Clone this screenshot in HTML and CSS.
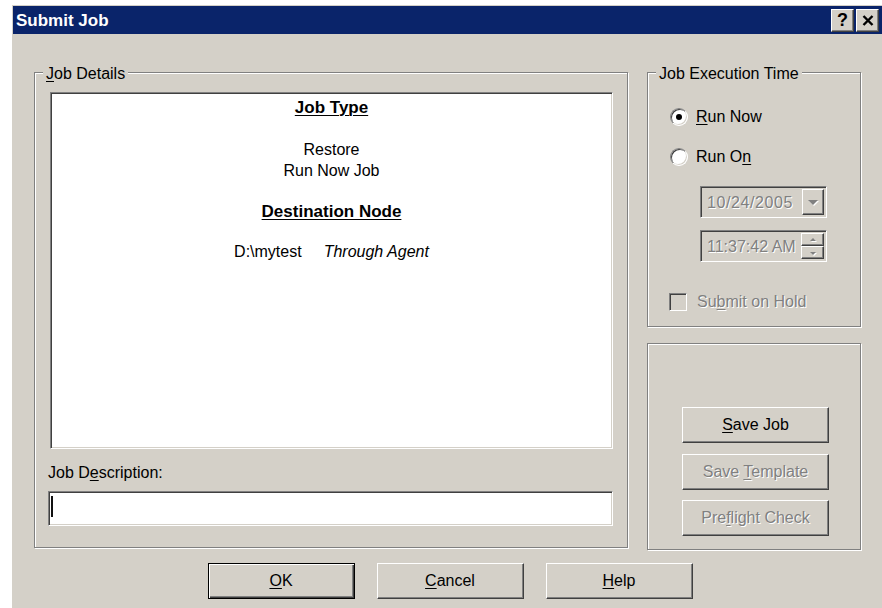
FILE: index.html
```html
<!DOCTYPE html>
<html lang="en">
<head>
<meta charset="utf-8">
<title>Submit Job</title>
<link rel="stylesheet" href="styles.css">
</head>
<body>
<div class="dialog">
  <div class="titlebar">
    <span class="title">Submit Job</span>
    <div class="caption-buttons">
      <button class="cap-btn cap-help" type="button">?</button>
      <button class="cap-btn cap-close" type="button" aria-label="Close">
        <svg width="12" height="11" viewBox="0 0 12 11"><path d="M1.5 1 L10.5 10 M10.5 1 L1.5 10" stroke="#000" stroke-width="2.4" fill="none"/></svg>
      </button>
    </div>
  </div>

  <div class="content">
    <div class="main-row">
      <fieldset class="group details">
        <legend><u>J</u>ob Details</legend>
        <div class="details-inner">
          <div class="summary">
            <div class="heading">Job Type</div>
            <div class="gap-a">Restore</div>
            <div>Run Now Job</div>
            <div class="heading gap-b">Destination Node</div>
            <div class="gap-c"><span>D:\mytest</span><span class="agent">Through Agent</span></div>
          </div>
          <div class="field-label">Job D<u>e</u>scription:</div>
          <div class="textbox"><span class="caret"></span></div>
        </div>
      </fieldset>

      <div class="side">
        <fieldset class="group exec">
          <legend>Job Execution Time</legend>
          <div class="exec-inner">
            <div class="option-row radio-row">
              <span class="radio checked"></span>
              <span class="option-label"><u>R</u>un Now</span>
            </div>
            <div class="option-row radio-row second">
              <span class="radio"></span>
              <span class="option-label">Run O<u>n</u></span>
            </div>
            <div class="field combo date">
              <span class="field-text disabled">10/24/2005</span>
              <span class="drop-btn"><span class="arrow-down"></span></span>
            </div>
            <div class="field combo time">
              <span class="field-text disabled">11:37:42 AM</span>
              <span class="spin">
                <span class="spin-btn"><span class="arrow-up small"></span></span>
                <span class="spin-btn"><span class="arrow-down small"></span></span>
              </span>
            </div>
            <div class="option-row check-row">
              <span class="checkbox"></span>
              <span class="option-label disabled check-label">Su<u>b</u>mit on Hold</span>
            </div>
          </div>
        </fieldset>

        <fieldset class="group actions">
          <div class="actions-inner">
            <button class="btn" type="button"><u>S</u>ave Job</button>
            <button class="btn disabled second" type="button">Save <u>T</u>emplate</button>
            <button class="btn disabled third" type="button">Pre<u>f</u>light Check</button>
          </div>
        </fieldset>
      </div>
    </div>

    <div class="bottom-row">
      <button class="btn btn-default" type="button"><u>O</u>K</button>
      <button class="btn" type="button"><u>C</u>ancel</button>
      <button class="btn" type="button"><u>H</u>elp</button>
    </div>
  </div>
</div>
</body>
</html>
```

FILE: styles.css
```css
* {
  box-sizing: border-box;
}

html,
body {
  margin: 0;
}

body {
  background: #fff;
  font-family: "Liberation Sans", Arial, sans-serif;
  font-size: 16px;
  color: #000;
  overflow: hidden;
}

u {
  text-decoration-thickness: 1px;
  text-underline-offset: 2px;
}

/* window frame */
.dialog {
  margin: 5px 0 0 12px;
  width: 870px;
  height: 603px;
  background: #d4d0c8;
  padding: 1px 0 0 1px;
}

.titlebar {
  display: flex;
  align-items: center;
  height: 28px;
  background: #0a246a;
  padding: 0 3px;
}

.title {
  flex: 1;
  height: 28px;
  padding-top: 2px;
  line-height: 26px;
  color: #fff;
  font-weight: bold;
  font-size: 17px;
}

.caption-buttons {
  display: flex;
  gap: 2px;
}

.cap-btn {
  width: 23px;
  height: 23px;
  padding: 0;
  display: flex;
  align-items: center;
  justify-content: center;
  background: #d4d0c8;
  border: 1px solid;
  border-color: #fff #404040 #404040 #fff;
  box-shadow: inset -1px -1px 0 #808080;
  font-family: "Liberation Sans", Arial, sans-serif;
  font-weight: bold;
  font-size: 18px;
  line-height: 1;
  color: #000;
}

/* dialog body */
.content {
  padding: 27px 21px 0;
}

.main-row {
  display: flex;
  align-items: flex-start;
  gap: 19px;
}

.group {
  margin: 0;
  padding: 0;
  min-width: 0;
  border: 1px solid #808080;
  box-shadow: inset 1px 1px 0 #fff, 1px 1px 0 #fff;
}

.group legend {
  margin-left: 8px;
  padding: 4px 3px 0;
  line-height: 18px;
  background: #d4d0c8;
}

.details {
  width: 594px;
}

.details-inner {
  padding: 9px 14px 21px 13px;
}

/* sunken white list area */
.summary {
  margin-left: 2px;
  width: 563px;
  height: 357px;
  padding-top: 4px;
  background: #fff;
  border: 1px solid;
  border-color: #808080 #fff #fff #808080;
  box-shadow: inset 1px 1px 0 #404040, inset -1px -1px 0 #d4d0c8;
  text-align: center;
  line-height: 21px;
}

.heading {
  font-weight: bold;
  font-size: 17px;
  text-decoration: underline;
  text-decoration-thickness: 1px;
  text-underline-offset: 2px;
}

.gap-a {
  margin-top: 21px;
}

.gap-b {
  margin-top: 20px;
}

.gap-c {
  margin-top: 19px;
}

.agent {
  margin-left: 22px;
  font-style: italic;
}

.field-label {
  margin-top: 15px;
  line-height: 18px;
}

.textbox {
  margin-top: 9px;
  width: 565px;
  height: 35px;
  padding: 4px 0 0 2px;
  background: #fff;
  border: 1px solid;
  border-color: #808080 #fff #fff #808080;
  box-shadow: inset 1px 1px 0 #404040, inset -1px -1px 0 #d4d0c8;
}

.caret {
  display: block;
  width: 2px;
  height: 21px;
  background: #111;
}

/* right column */
.side {
  width: 214px;
}

.side .group {
  width: 100%;
}

.exec-inner {
  padding: 22px 0 12px;
}

.option-row {
  display: flex;
  align-items: center;
  height: 24px;
}

.radio-row {
  padding-left: 22px;
}

.radio-row.second {
  margin-top: 16px;
}

.option-label {
  margin-left: 8px;
  line-height: 18px;
}

.radio {
  position: relative;
  width: 18px;
  height: 18px;
  border-radius: 50%;
  background: #fff;
  border: 1px solid;
  border-color: #808080 #fff #fff #808080;
  box-shadow: inset 1px 1px 0 #404040, inset -1px -1px 0 #d4d0c8;
}

.radio.checked::after {
  content: "";
  position: absolute;
  left: 5px;
  top: 5px;
  width: 6px;
  height: 6px;
  border-radius: 50%;
  background: #000;
}

.disabled {
  color: #808080;
  text-shadow: 1px 1px 0 #fff;
}

.field {
  display: flex;
  align-items: stretch;
  width: 127px;
  height: 32px;
  margin-left: 52px;
  padding: 2px;
  background: #d4d0c8;
  border: 1px solid;
  border-color: #808080 #fff #fff #808080;
  box-shadow: inset 1px 1px 0 #404040, inset -1px -1px 0 #d4d0c8;
}

.date {
  margin-top: 17px;
}

.date .field-text {
  letter-spacing: 0.6px;
}

.time {
  margin-top: 12px;
}

.field-text {
  flex: 1;
  padding-left: 4px;
  line-height: 28px;
  white-space: nowrap;
  overflow: hidden;
}

.drop-btn,
.spin-btn {
  display: flex;
  align-items: center;
  justify-content: center;
  background: #d4d0c8;
  border: 1px solid;
  border-color: #fff #404040 #404040 #fff;
  box-shadow: inset -1px -1px 0 #808080;
}

.drop-btn {
  width: 22px;
}

.spin {
  display: flex;
  flex-direction: column;
  width: 23px;
}

.spin-btn {
  flex: 1;
}

.arrow-down,
.arrow-up {
  width: 0;
  height: 0;
  border-left: 5px solid transparent;
  border-right: 5px solid transparent;
  filter: drop-shadow(1px 1px 0 #fff);
}

.arrow-down {
  border-top: 5px solid #808080;
  margin-top: 1px;
}

.arrow-up {
  border-bottom: 5px solid #808080;
}

.arrow-down.small,
.arrow-up.small {
  border-left-width: 3px;
  border-right-width: 3px;
}

.arrow-down.small {
  border-top-width: 3px;
}

.arrow-up.small {
  border-bottom-width: 3px;
}

.check-row {
  margin-top: 28px;
  padding-left: 21px;
}

.checkbox {
  width: 18px;
  height: 18px;
  background: #d4d0c8;
  border: 1px solid;
  border-color: #808080 #fff #fff #808080;
  box-shadow: inset 1px 1px 0 #404040, inset -1px -1px 0 #d4d0c8;
}

.check-label {
  margin-left: 10px;
}

.actions {
  margin-top: 16px;
}

.actions-inner {
  display: flex;
  flex-direction: column;
  padding: 63px 0 13px 34px;
}

.actions-inner .second {
  margin-top: 11px;
}

.actions-inner .third {
  margin-top: 10px;
}

/* push buttons */
.btn {
  width: 147px;
  height: 36px;
  padding: 0;
  font: inherit;
  line-height: 18px;
  background: #d4d0c8;
  color: #000;
  border: 1px solid;
  border-color: #fff #404040 #404040 #fff;
  box-shadow: inset -1px -1px 0 #808080;
}

.btn.disabled {
  color: #808080;
}

.btn-default {
  border-color: #000;
  box-shadow: inset 1px 1px 0 #fff, inset -1px -1px 0 #404040, inset -2px -2px 0 #808080;
}

.bottom-row {
  display: flex;
  justify-content: center;
  gap: 22px;
  margin-top: 13px;
  padding-left: 5px;
}
```
